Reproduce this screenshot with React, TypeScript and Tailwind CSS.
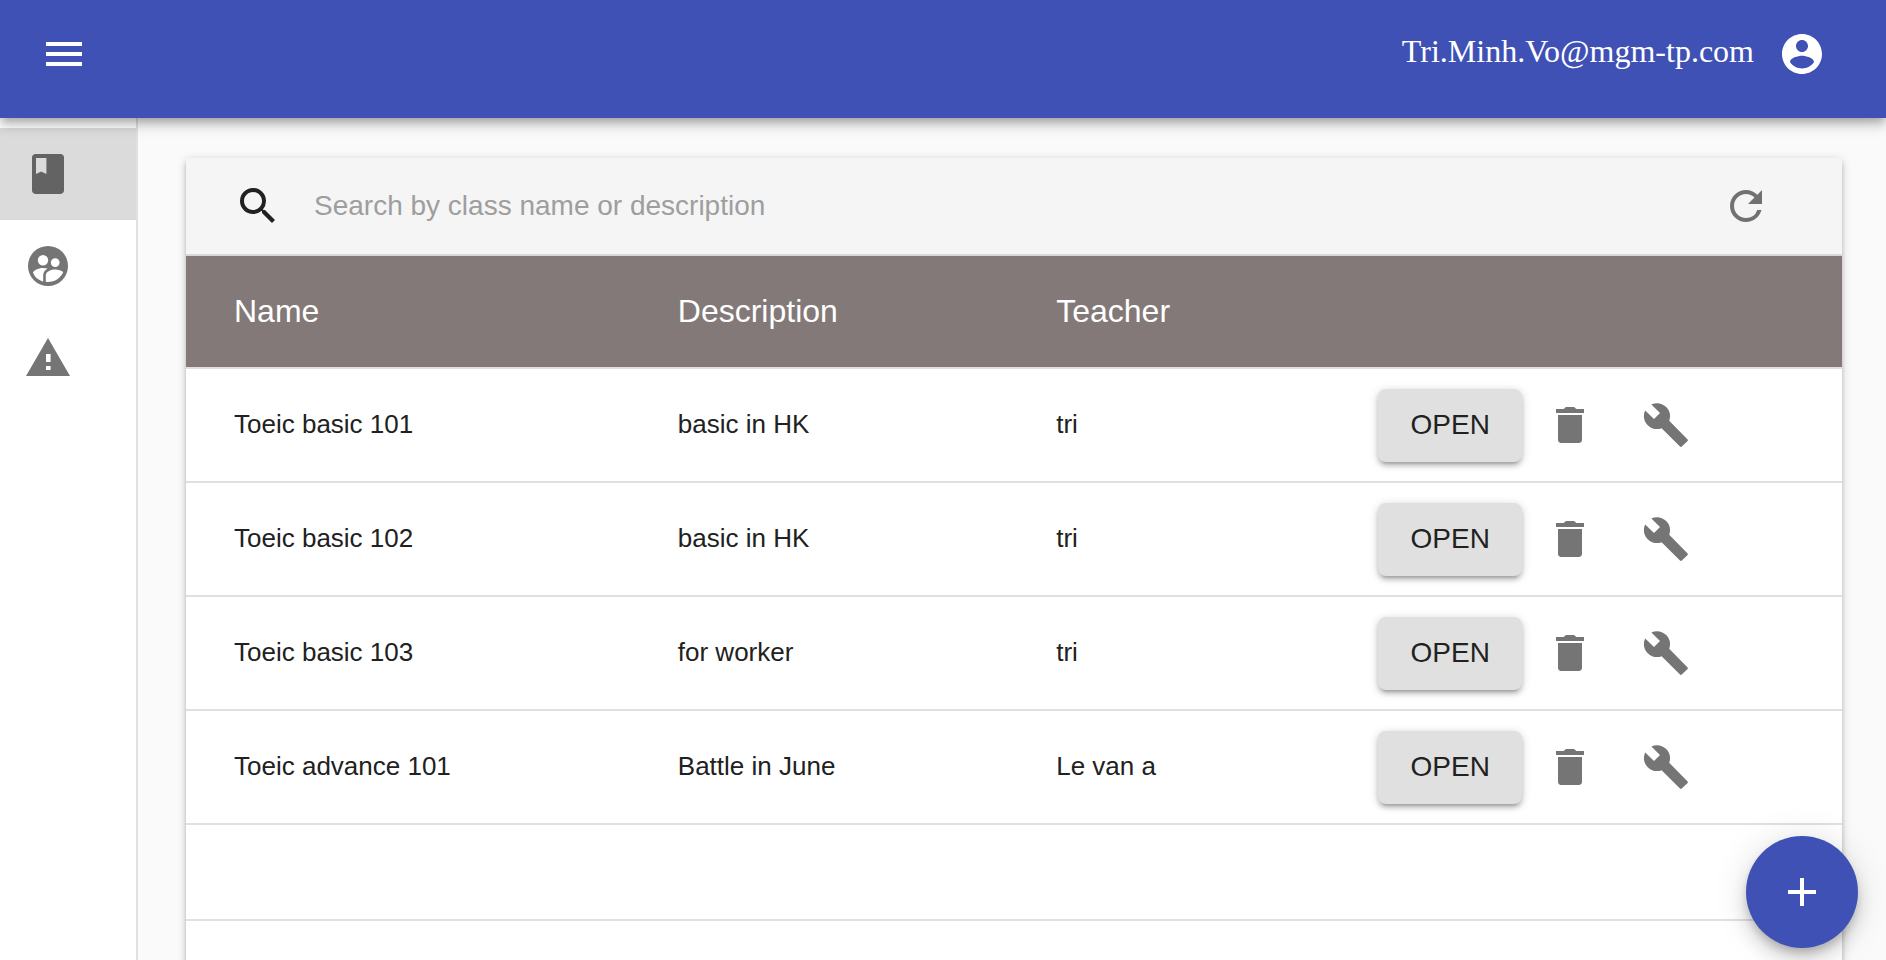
import React, { useState } from "react";
import { MdAdd, MdMenu, MdRefresh, MdSearch } from "react-icons/md";

type ClassRow = { name: string; description: string; teacher: string };

const classes: ClassRow[] = [
  { name: "Toeic basic 101", description: "basic in HK", teacher: "tri" },
  { name: "Toeic basic 102", description: "basic in HK", teacher: "tri" },
  { name: "Toeic basic 103", description: "for worker", teacher: "tri" },
  { name: "Toeic advance 101", description: "Battle in June", teacher: "Le van a" },
];

function Glyph({ d }: { d: string }) {
  return (
    <svg viewBox="0 0 24 24" className="size-12 fill-current" aria-hidden="true">
      <path fillRule="evenodd" d={d} />
    </svg>
  );
}

const glyphs = {
  account:
    "M12 2C6.48 2 2 6.48 2 12s4.48 10 10 10 10-4.48 10-10S17.52 2 12 2zm0 3c1.66 0 3 1.34 3 3s-1.34 3-3 3-3-1.34-3-3 1.34-3 3-3zm0 14.2c-2.5 0-4.71-1.28-6-3.22.03-1.99 4-3.08 6-3.08 1.99 0 5.97 1.09 6 3.08-1.29 1.94-3.5 3.22-6 3.22z",
  book: "M18.3 2H5.7C4.8 2 4 2.8 4 3.7v16.6c0 .9.8 1.7 1.7 1.7h12.6c.9 0 1.7-.8 1.7-1.7V3.7C20 2.8 19.2 2 18.3 2zM6 4h5.2v8l-2.6-1.3L6 12V4z",
  people:
    "M12 2a10 10 0 1 0 0 20 10 10 0 0 0 0-20zM9.5 6.5a2.6 2.6 0 1 1 0 5.2 2.6 2.6 0 0 1 0-5.2zM15.6 8.1a2.2 2.2 0 1 1 0 4.4 2.2 2.2 0 0 1 0-4.4zM4.5 15.2C5.2 13.8 7.7 13 9.5 13c.8 0 1.6.1 2.3.3-1.5.9-2.2 2.1-2.2 3.3v3.1C7.2 19 5.2 17.4 4.5 15.2zM10.9 19.9v-3.3c0-1.9 2.8-2.9 4.8-2.9 1.4 0 3.1.4 3.9 1.3-1.2 3-4.1 5-7.6 5-.4 0-.7 0-1.1-.1z",
  warning: "M1 21h22L12 2 1 21zM13.3 18H11v-2h2.3v2zM13.3 14H11v-4h2.3v4z",
  trash:
    "M6 19.5c0 .8.7 1.5 1.5 1.5h9c.8 0 1.5-.7 1.5-1.5V7H6v12.5zM19 4h-3.7c-.5 0-.7-1-1.6-1h-3.4c-.9 0-1.1 1-1.6 1H5v2h14V4z",
  wrench:
    "M22.8 19.3l-9.2-9.4c.9-2.3.4-5-1.5-6.9-2-2-5-2.4-7.4-1.3L9 6 6 9 1.6 4.7C.4 7.1.9 10.1 2.9 12.1c1.9 1.9 4.6 2.4 6.9 1.5l9.2 9.2c.3.3.6.3.9 0l2.9-2.8c.2-.2.2-.5 0-.7z",
};

const navItems = [
  { label: "Classes", glyph: glyphs.book },
  { label: "Users", glyph: glyphs.people },
  { label: "Reports", glyph: glyphs.warning },
];

function TopBar() {
  return (
    <header className="relative z-20 flex h-[118px] shrink-0 items-start justify-between bg-[#3f51b5] pt-[30px] pr-[60px] pl-10 text-white shadow-[0_4px_8px_-2px_rgba(0,0,0,0.2),0_8px_10px_0_rgba(0,0,0,0.14),0_2px_20px_0_rgba(0,0,0,0.12)]">
      <button type="button" aria-label="Open menu">
        <MdMenu className="size-12" />
      </button>
      <div className="flex items-start gap-6">
        <span className="font-['Liberation_Serif',serif] text-[32px] leading-[42px]">
          Tri.Minh.Vo@mgm-tp.com
        </span>
        <button type="button" aria-label="Account">
          <Glyph d={glyphs.account} />
        </button>
      </div>
    </header>
  );
}

function SideNav() {
  return (
    <nav className="w-[138px] shrink-0 border-r-2 border-[#e0e0e0] bg-white pt-[10px]">
      {navItems.map(({ label, glyph }, index) => (
        <a
          key={label}
          href="#"
          aria-label={label}
          className={
            index === 0
              ? "flex h-[92px] items-center bg-[#dbdbdb] pl-6 text-[#636363]"
              : "flex h-[92px] items-center pl-6 text-[#757575]"
          }
        >
          <Glyph d={glyph} />
        </a>
      ))}
    </nav>
  );
}

function SearchBar() {
  const [query, setQuery] = useState("");
  return (
    <div className="flex h-[98px] items-center rounded-t-[4px] border-b-2 border-[#d8d8d8] bg-[#f5f5f5] pr-[72px] pl-12">
      <label htmlFor="class-search" className="mr-8 text-[#212121]">
        <MdSearch className="size-12" aria-label="Search" />
      </label>
      <input
        id="class-search"
        type="text"
        value={query}
        onChange={(event) => setQuery(event.target.value)}
        placeholder="Search by class name or description"
        className="h-16 min-w-0 flex-1 bg-transparent text-[28px] text-[#212121] outline-none placeholder:text-[#9e9e9e]"
      />
      <button type="button" aria-label="Refresh" className="text-[#717171]">
        <MdRefresh className="size-12" />
      </button>
    </div>
  );
}

function ClassTable() {
  return (
    <table className="w-full table-fixed border-collapse text-left">
      <colgroup>
        <col className="w-[26.8%]" />
        <col className="w-[22.85%]" />
        <col className="w-[19.45%]" />
        <col />
      </colgroup>
      <thead>
        <tr className="h-[113px] bg-[#837978] text-[32px] text-white shadow-[inset_0_-2px_0_#e0e0e0]">
          <th className="pb-1 pl-12 font-normal">Name</th>
          <th className="pb-1 pl-12 font-normal">Description</th>
          <th className="pb-1 pl-12 font-normal">Teacher</th>
          <th aria-label="Actions" />
        </tr>
      </thead>
      <tbody>
        {classes.map((row) => (
          <tr
            key={row.name}
            className="h-[114px] text-[26px] text-[#212121] shadow-[inset_0_-2px_0_#e0e0e0]"
          >
            <td className="pb-1 pl-12">{row.name}</td>
            <td className="pb-1 pl-12">{row.description}</td>
            <td className="pb-1 pl-12">{row.teacher}</td>
            <td className="pb-0.5 pl-12">
              <div className="flex items-center text-[#757575]">
                <button
                  type="button"
                  className="h-[73px] w-36 rounded-lg bg-[#e0e0e0] text-[28px] text-[#212121] shadow-[0_2px_10px_0_rgba(0,0,0,0.2),0_4px_4px_0_rgba(0,0,0,0.14),0_6px_2px_-4px_rgba(0,0,0,0.12)]"
                >
                  OPEN
                </button>
                <button
                  type="button"
                  aria-label={`Delete ${row.name}`}
                  className="flex w-24 justify-center"
                >
                  <Glyph d={glyphs.trash} />
                </button>
                <button
                  type="button"
                  aria-label={`Edit ${row.name}`}
                  className="flex w-24 justify-center"
                >
                  <Glyph d={glyphs.wrench} />
                </button>
              </div>
            </td>
          </tr>
        ))}
        <tr className="h-24 shadow-[inset_0_-2px_0_#e0e0e0]">
          <td colSpan={4} />
        </tr>
        <tr className="h-28">
          <td colSpan={4} />
        </tr>
      </tbody>
    </table>
  );
}

export default function App() {
  return (
    <div className="flex h-screen flex-col overflow-hidden bg-[#fafafa] font-['Liberation_Sans',Arial,sans-serif]">
      <TopBar />
      <div className="flex min-h-0 flex-1">
        <SideNav />
        <main className="min-w-0 flex-1 overflow-y-auto pt-10 pr-11 pl-12 [scrollbar-width:none]">
          <section className="rounded-[4px] bg-white shadow-[0_2px_10px_0_rgba(0,0,0,0.2),0_4px_4px_0_rgba(0,0,0,0.14),0_6px_2px_-4px_rgba(0,0,0,0.12)]">
            <SearchBar />
            <ClassTable />
          </section>
        </main>
      </div>
      <button
        type="button"
        aria-label="Add class"
        className="fixed right-7 bottom-3 z-10 flex size-28 items-center justify-center rounded-full bg-[#3f51b5] text-white shadow-[0_6px_10px_-2px_rgba(0,0,0,0.2),0_12px_20px_0_rgba(0,0,0,0.14),0_2px_36px_0_rgba(0,0,0,0.12)]"
      >
        <MdAdd className="size-12" />
      </button>
    </div>
  );
}
